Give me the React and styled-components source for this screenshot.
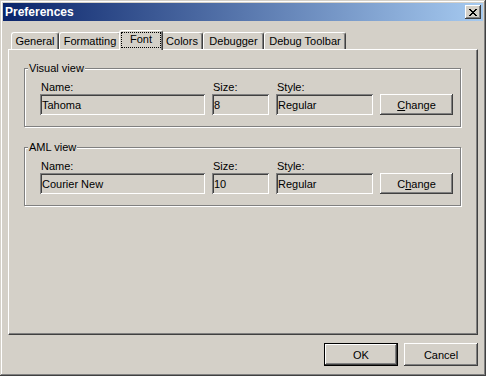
import React from 'react';
import styled, { createGlobalStyle, css } from 'styled-components';

const face = '#d4d0c8';
const shadow = '#808080';
const dark = '#404040';

const GlobalStyle = createGlobalStyle`
  * { box-sizing: border-box; }
  body {
    margin: 0;
    background: ${face};
  }
`;

const Window = styled.div`
  width: 486px;
  height: 376px;
  display: flex;
  flex-direction: column;
  padding: 3px;
  background: ${face};
  box-shadow: inset -1px -1px ${dark}, inset 1px 1px ${face}, inset -2px -2px ${shadow},
    inset 2px 2px #fff;
  font-family: 'Liberation Sans', Arial, sans-serif;
  font-size: 11px;
  color: #000;
`;

const TitleBar = styled.div`
  height: 18px;
  flex: none;
  display: flex;
  align-items: center;
  justify-content: space-between;
  padding: 0 2px;
  background: linear-gradient(to right, #0a246a, #a6caf0);
`;

const Title = styled.span`
  color: #fff;
  font-weight: bold;
  font-size: 12px;
  line-height: 14px;
`;

const CloseButton = styled.div`
  width: 16px;
  height: 14px;
  display: flex;
  align-items: center;
  justify-content: center;
  padding-top: 1px;
  background: ${face};
  box-shadow: inset -1px -1px ${dark}, inset 1px 1px #fff, inset -2px -2px ${shadow};
`;

const Body = styled.div`
  flex: 1;
  display: flex;
  flex-direction: column;
  padding: 0 5px 7px;
`;

const TabStrip = styled.div`
  display: flex;
  align-items: flex-end;
  height: 19px;
  margin-top: 9px;
  padding-left: 3px;
`;

const Tab = styled.div`
  width: ${p => p.$w}px;
  height: 17px;
  padding-top: 2px;
  text-align: center;
  line-height: 13px;
  white-space: nowrap;
  background: ${face};
  border-top: 1px solid #fff;
  border-left: 1px solid #fff;
  border-right: 1px solid ${dark};
  border-radius: 3px 3px 0 0;
  box-shadow: inset -1px 0 ${shadow};

  ${p =>
    p.$active &&
    css`
      position: relative;
      z-index: 1;
      width: ${p.$w + 4}px;
      height: 20px;
      margin: 0 -2px -1px;
      padding: 1px 1px 2px 1px;
      display: flex;
    `}
`;

const Focus = styled.span`
  flex: 1;
  padding-top: 1px;
  outline: 1px dotted #000;
  outline-offset: -1px;
`;

const Page = styled.div`
  flex: 1;
  padding: 12px 16px 0 15px;
  border-top: 1px solid #fff;
  border-left: 1px solid #fff;
  border-right: 1px solid ${dark};
  border-bottom: 1px solid ${dark};
  box-shadow: inset -1px -1px ${shadow};
`;

const Group = styled.fieldset`
  margin: 0;
  min-width: 0;
  padding: 6px 0 11px 15px;
  border: 1px solid ${shadow};
  box-shadow: inset 1px 1px #fff, 1px 1px #fff;

  & + & {
    margin-top: 14px;
  }
`;

const Legend = styled.legend`
  margin-left: -12px;
  padding: 0 1px;
  line-height: 13px;
  background: ${face};
`;

const Row = styled.div`
  display: flex;
  align-items: flex-end;
  gap: 7px;
`;

const Field = styled.label`
  width: ${p => p.$w}px;
  flex: none;
  display: flex;
  flex-direction: column;
`;

const Caption = styled.span`
  line-height: 13px;
  padding-left: 1px;
`;

const TextBox = styled.input`
  width: 100%;
  height: 21px;
  padding: 0 2px;
  border: none;
  outline: none;
  font: inherit;
  color: #000;
  background: ${face};
  box-shadow: inset 1px 1px ${shadow}, inset -1px -1px #fff, inset 2px 2px ${dark},
    inset -2px -2px ${face};
`;

const Button = styled.button`
  width: ${p => p.$w}px;
  height: ${p => p.$h}px;
  flex: none;
  padding: 0;
  border: none;
  font: inherit;
  color: #000;
  background: ${face};
  box-shadow: inset -1px -1px ${dark}, inset 1px 1px #fff, inset -2px -2px ${shadow};

  ${p =>
    p.$default &&
    css`
      box-shadow: inset 0 0 0 1px #000, inset -2px -2px ${dark}, inset 2px 2px #fff,
        inset -3px -3px ${shadow};
    `}
`;

const Footer = styled.div`
  display: flex;
  justify-content: flex-end;
  gap: 6px;
  margin-top: 8px;
`;

const tabs = [
  { label: 'General', w: 48 },
  { label: 'Formatting', w: 62 },
  { label: 'Font', w: 40, active: true },
  { label: 'Colors', w: 42 },
  { label: 'Debugger', w: 61 },
  { label: 'Debug Toolbar', w: 82 },
];

const groups = [
  { title: 'Visual view', name: 'Tahoma', size: '8', style: 'Regular', hotkey: 0 },
  { title: 'AML view', name: 'Courier New', size: '10', style: 'Regular', hotkey: 1 },
];

const Mnemonic = ({ text, at }) => (
  <>
    {text.slice(0, at)}
    <u>{text[at]}</u>
    {text.slice(at + 1)}
  </>
);

const CloseGlyph = () => (
  <svg width="8" height="7" viewBox="0 0 8 7" shapeRendering="crispEdges">
    <path
      fill="#000"
      d="M0 0h2v1H0zM6 0h2v1H6zM1 1h2v1H1zM5 1h2v1H5zM2 2h4v1H2zM3 3h2v1H3zM2 4h4v1H2zM1 5h2v1H1zM5 5h2v1H5zM0 6h2v1H0zM6 6h2v1H6z"
    />
  </svg>
);

const App = () => (
  <>
    <GlobalStyle />
    <Window>
      <TitleBar>
        <Title>Preferences</Title>
        <CloseButton>
          <CloseGlyph />
        </CloseButton>
      </TitleBar>
      <Body>
        <TabStrip>
          {tabs.map(t => (
            <Tab key={t.label} $w={t.w} $active={t.active}>
              {t.active ? <Focus>{t.label}</Focus> : t.label}
            </Tab>
          ))}
        </TabStrip>
        <Page>
          {groups.map(g => (
            <Group key={g.title}>
              <Legend>{g.title}</Legend>
              <Row>
                <Field $w={165}>
                  <Caption>Name:</Caption>
                  <TextBox readOnly value={g.name} />
                </Field>
                <Field $w={57}>
                  <Caption>Size:</Caption>
                  <TextBox readOnly value={g.size} />
                </Field>
                <Field $w={97}>
                  <Caption>Style:</Caption>
                  <TextBox readOnly value={g.style} />
                </Field>
                <Button $w={73} $h={21}>
                  <Mnemonic text="Change" at={g.hotkey} />
                </Button>
              </Row>
            </Group>
          ))}
        </Page>
        <Footer>
          <Button $w={74} $h={23} $default>
            OK
          </Button>
          <Button $w={74} $h={23}>
            Cancel
          </Button>
        </Footer>
      </Body>
    </Window>
  </>
);

export default App;
